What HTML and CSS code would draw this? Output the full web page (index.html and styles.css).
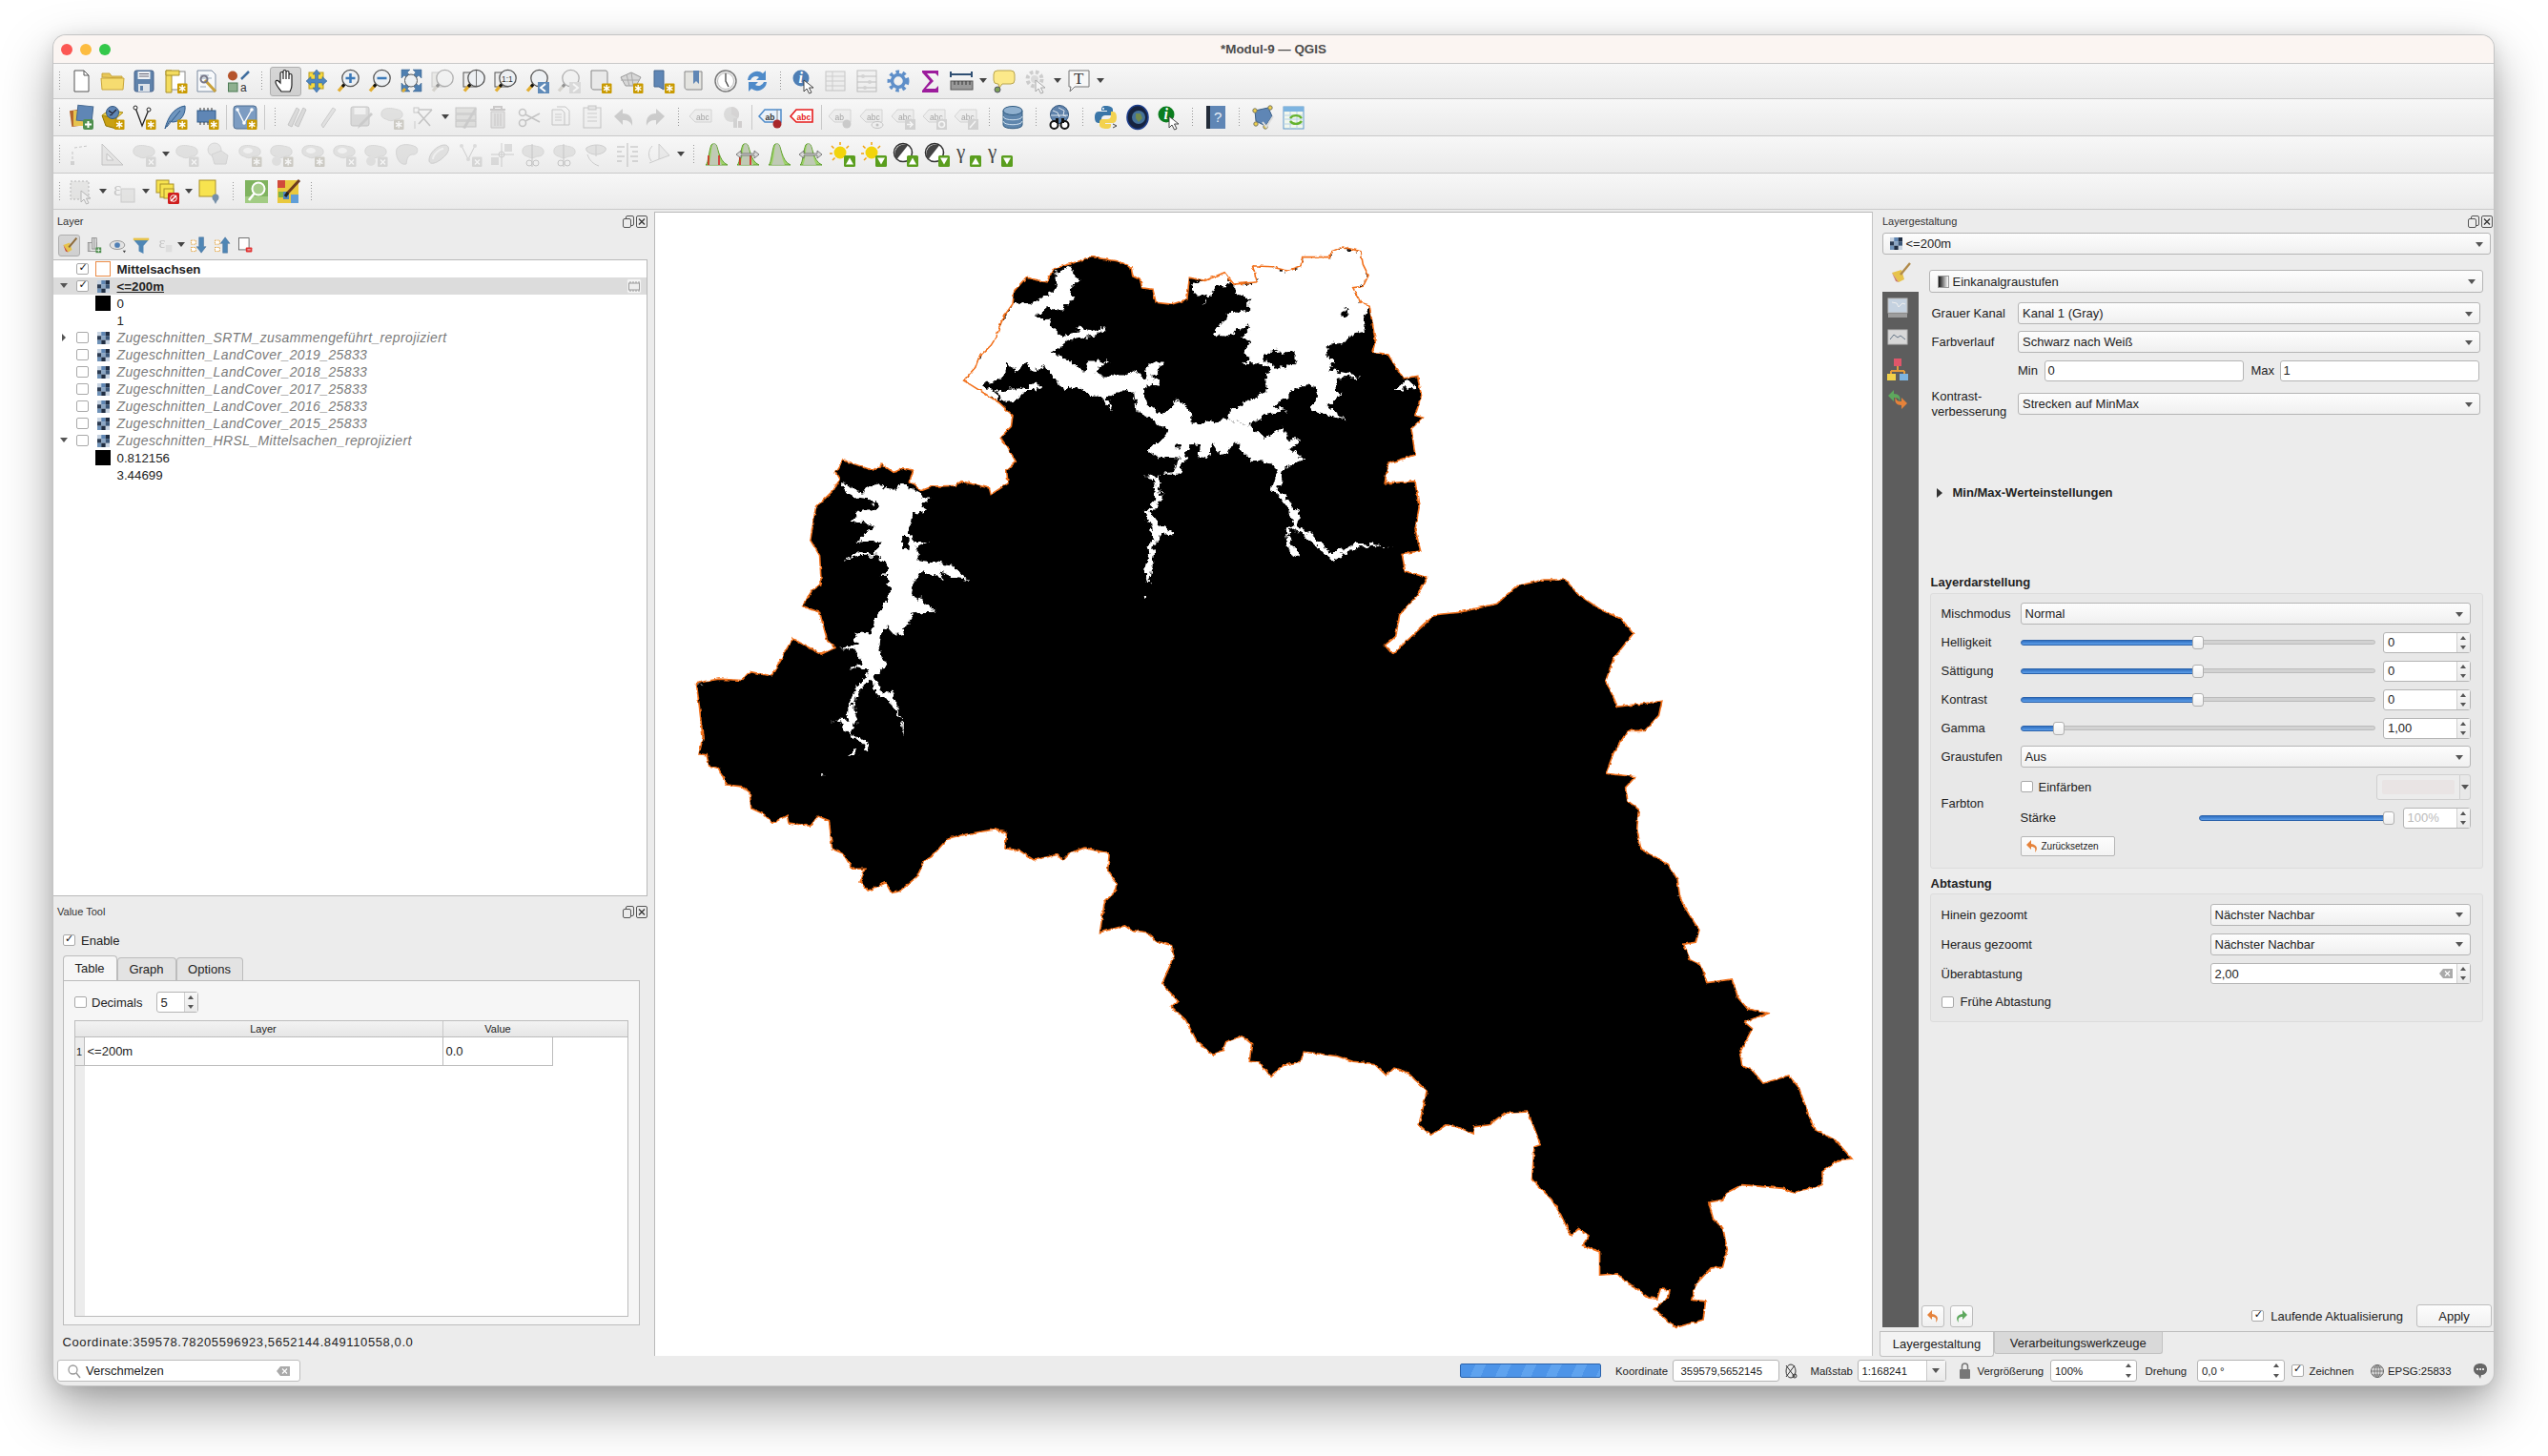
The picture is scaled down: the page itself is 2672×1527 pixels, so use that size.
FILE: index.html
```html
<!DOCTYPE html>
<html lang="de">
<head>
    <meta charset="UTF-8">
    <title>*Modul-9 — QGIS</title>
    <link rel="stylesheet" href="styles.css">
</head>
<body>

<!-- shared icon parts, every icon is drawn in px on a 26x26 box -->
<svg class="defs">
    <defs>
        <filter id="rough" color-interpolation-filters="sRGB"><feTurbulence type="fractalNoise" baseFrequency=".2" numOctaves="2" seed="3"/><feDisplacementMap in="SourceGraphic" scale="3.500" xChannelSelector="R" yChannelSelector="G"/></filter>
        <filter id="rougher" color-interpolation-filters="sRGB" x="-5%" y="-5%" width="110%" height="110%"><feTurbulence type="fractalNoise" baseFrequency=".13" numOctaves="3" seed="8"/><feDisplacementMap in="SourceGraphic" scale="9" xChannelSelector="R" yChannelSelector="G"/></filter>
        <g id="star"><rect x="15" y="15.500" width="10.500" height="10.500" rx="1" fill="#c99a00"/><path d="M20.200 17v7.500M17 18.800l6.400 3.900M23.400 18.800l-6.400 3.900" stroke="#fff" stroke-width="1.400"/></g>
        <g id="badge"><rect x="15" y="15.500" width="10.500" height="10.500" rx="1" fill="#b5b5b0"/><path d="M18 18.500l5 5M23 18.500l-5 5" stroke="#fff" stroke-width="1.400"/></g>
        <g id="lens"><path d="M9 16.500L3 23.500" stroke="#e2ae32" stroke-width="3.400"/><path d="M10 15.500l-3 3.500" stroke="#111" stroke-width="3"/><circle cx="15.500" cy="10" r="8.700" fill="#edf0f3" stroke="#555" stroke-width="1.300"/></g>
        <g id="blob"><path d="M2 8c1-5 9-5 13-4s8 1 9 5c1 5-4 6-6 6s-5 3-9 1-8-2-7-8z" fill="#c9c9c3" stroke="#b0b0aa"/></g>
        <g id="gup"><rect x="15" y="14" width="12" height="12" rx="1.500" fill="#5a9e1e"/><path d="M21 16.500l4 7h-8z" fill="#fff"/></g>
        <g id="gdown"><rect x="15" y="14" width="12" height="12" rx="1.500" fill="#5a9e1e"/><path d="M21 23.500l4-7h-8z" fill="#fff"/></g>
        <g id="sun"><circle cx="11" cy="11" r="6.500" fill="#f2d40c"/><path d="M11 0v3M2 4l2.500 2.500M20 4l-2.500 2.500M0 12h3M3 19l2.500-2.500" stroke="#f2a30c" stroke-width="1.500"/></g>
        <g id="cont"><circle cx="11" cy="11" r="9.500" fill="#fff" stroke="#333" stroke-width="1.600"/><path d="M16 3.500A9.500 9.500 0 0 0 4.500 18z" fill="#444"/></g>
        <g id="hist"><path d="M2 24C5 24 6 2 9 2h3c3 0 3 18 13 22z" fill="#9fd36a" stroke="#5f9e2e"/><path d="M5 24c3-3 3-22 5-22h2c2 0 3 14 7 22z" fill="#c8c8c8" opacity=".8"/></g>
        <g id="tag"><path d="M1 12l6-7h17v13H7z" fill="#e8e8e0" stroke="#aaa"/></g>
        <g id="cursor"><path d="M13 12v12l3-3 2.500 5 2.500-1-2.500-5H23z" fill="#fff" stroke="#333" stroke-width=".9"/></g>
        <g id="raster"><rect width="13" height="13" fill="#c7d3e1"/><rect x="4.300" width="4.300" height="4.300" fill="#5f86b3"/><rect x="8.700" width="4.300" height="4.300" fill="#1f2d42"/><rect y="4.300" width="4.300" height="4.300" fill="#2b3b52"/><rect x="4.300" y="4.300" width="4.300" height="4.300" fill="#8ba6c4"/><rect x="8.700" y="4.300" width="4.300" height="4.300" fill="#3c5778"/><rect y="8.700" width="4.300" height="4.300" fill="#6f92b8"/><rect x="4.300" y="8.700" width="4.300" height="4.300" fill="#1f2d42"/></g>
        <g id="float"><rect x="3.500" y=".500" width="8" height="10" rx="1.500" fill="none" stroke="#555"/><rect x=".500" y="3.500" width="8" height="9" rx="1.500" fill="#ececec" stroke="#555"/></g>
        <g id="close"><rect x=".500" y=".500" width="11" height="12" rx="1.500" fill="none" stroke="#555"/><path d="M3 3.500l6 6M9 3.500l-6 6" stroke="#333" stroke-width="1.300"/></g>

        <polyline id="north" vector-effect="non-scaling-stroke" points="60,1082 90,1072 120,1075 130,1055 158,1065 185,980 222,1015 240,1000 230,985 220,920 198,905 210,870 222,855 220,790 208,755 215,680 238,640 245,615 240,600 250,572 288,595 300,582 315,600 328,590 340,595 336,620 350,642 365,632 395,630 402,620 438,636 440,650 462,625 460,595 472,575 462,545 452,520 466,495 468,470 450,440 405,390 420,360 425,335 440,310 447,290 452,262 458,240 468,215 470,185 485,155 512,165 520,135 545,122 570,108 605,118 620,130 622,152 632,160 634,178 648,182 652,212 672,216 692,205 695,155 715,162 740,143 752,170 782,165 776,128 800,130 822,140 838,130 840,108 875,108 878,95 892,85 915,95 918,125 925,150 918,175 905,178 915,212 926,218 934,300 930,325 950,330 958,352 970,385 988,380 993,425 985,470 995,475 980,500 985,560 950,580 946,625 985,620 990,680 985,730 992,780 968,785 972,825 1000,840 988,880 965,925 960,975 946,995 956,1015 1010,925 1040,920 1090,900 1115,860 1150,845 1178,845 1195,880 1225,915 1250,935 1265,968 1240,1025 1230,1075 1245,1135 1270,1130 1302,1122 1298,1155 1280,1190 1258,1190 1240,1240 1230,1288 1268,1295 1255,1320 1258,1350 1272,1370 1270,1415 1275,1460 1310,1495 1322,1530 1325,1568"/>
        <polyline id="south" vector-effect="non-scaling-stroke" points="1325,523 1330,545 1350,600 1345,628 1330,632 1338,668 1352,680 1360,720 1392,712 1400,755 1412,780 1438,790 1408,810 1418,825 1402,880 1405,910 1418,920 1432,950 1465,932 1478,960 1490,1020 1498,1055 1525,1080 1546,1122 1530,1125 1508,1152 1508,1182 1470,1200 1458,1190 1405,1182 1385,1200 1380,1216 1362,1222 1368,1260 1380,1280 1386,1330 1380,1370 1365,1372 1345,1410 1340,1445 1358,1448 1355,1490 1320,1508 1308,1490 1292,1465 1310,1440 1312,1422 1300,1420 1296,1442 1285,1440 1270,1420 1250,1395 1245,1385 1222,1388 1222,1335 1200,1320 1208,1298 1195,1282 1185,1298 1172,1250 1160,1215 1135,1170 1138,1095 1146,1090 1130,1015 1100,1018 1080,1045 1060,1050 1060,1065 1040,1050 1025,1045 1005,1068 990,1045 1000,968 975,925 958,915 948,932 932,905 905,900 885,888 842,878 838,900 815,910 800,935 785,902 772,900 775,860 763,842 742,855 738,875 725,885 705,855 690,805 672,775 680,762 660,722 675,660 672,635 652,625 640,605 620,600 612,590 580,605 586,535 598,515 602,495 590,465 592,425 560,412 540,425 532,440 525,428 495,440 478,420 458,413 460,378 445,370 418,378 385,390 365,430 355,440 345,478 322,512 312,515 305,492 282,510 272,490 278,460 262,460 250,425 236,415 232,350 218,340 208,362 180,355 178,338 160,355 148,335 132,322 130,285 120,272 100,268 90,230 78,225 75,200 65,198 70,160 62,40 60,37"/>
    </defs>
</svg>

<div class="win">

    <div class="titlebar">
        <span class="light red"></span><span class="light amber"></span><span class="light green"></span>
        <span class="wintitle">*Modul-9 — QGIS</span>
    </div>

    <!-- Row 1: project, navigation, attributes -->
    <div class="tb">
        <i class="g lead"></i>
        <svg class="i"><path d="M6 2h10l5 5v17H6z" fill="#fff" stroke="#555"/><path d="M16 2v5h5" fill="none" stroke="#555"/></svg>
        <svg class="i"><path d="M2 9V5h8l2 3h11v2z" fill="#e8c85a" stroke="#c9a63a"/><path d="M2 22L1 10h24l-1 12z" fill="#f6dc70" stroke="#c9a63a"/></svg>
        <svg class="i"><rect x="3" y="2" width="20" height="22" rx="2" fill="#5f82ab" stroke="#44618a"/><rect x="6.500" y="3" width="13" height="8" fill="#eef1f5"/><path d="M8 5.500h10M8 8h10" stroke="#667"/><rect x="7" y="16" width="12" height="8" fill="#dde3ea"/><rect x="9" y="18" width="3" height="5" fill="#5f82ab"/></svg>
        <svg class="i"><rect x="8" y="3" width="15" height="19" fill="#fff" stroke="#888"/><path d="M3 2h6v23H3z" fill="#f3dc5f" stroke="#a8902a"/><path d="M3 2h14v5H3z" fill="#f3dc5f" stroke="#a8902a"/><use href="#star"/></svg>
        <svg class="i"><path d="M3 2h15l4 4v18H3z" fill="#f7f9fb" stroke="#7a8aa0"/><path d="M6 7h9M6 10h12M6 19h6" stroke="#9ab"/><path d="M11 12l11 12" stroke="#c9a23a" stroke-width="3"/><circle cx="10" cy="11" r="3.500" fill="none" stroke="#778" stroke-width="2"/></svg>
        <svg class="i"><circle cx="7" cy="7.500" r="5" fill="#b5532b"/><path d="M16 11l8-8" stroke="#3f6d9e" stroke-width="2.500"/><rect x="2.500" y="15" width="9.500" height="9" fill="#8fb08f" stroke="#4d7a55"/><text x="15" y="24" class="it">a</text></svg>
        <i class="g"></i>
        <span class="btn-on"><svg class="i"><path d="M9 24c-2-3-6-7-6-10 0-2 2-2 3-1l2 2V5c0-2 3-2 3 0v6V3c0-2 3-2 3 0v8V4c0-2 3-2 3 0v7V7c0-2 3-2 3 0v10c0 4-1 5-2 7z" fill="#fff" stroke="#222" stroke-width="1.200"/></svg></span>
        <svg class="i"><rect x="5" y="4" width="15" height="17" fill="#f7d93c" stroke="#b79a1f"/><path d="M13 1l4 5h-2.500v5H19V8.500l5 4.500-5 4.500V15h-4.500v5H17l-4 5-4-5h2.500v-5H7v2.500L2 13l5-4.500V11h4.500V6H9z" fill="#4f86bf" stroke="#2d5d92" stroke-width=".5"/></svg>
        <svg class="i"><use href="#lens"/><path d="M15.500 5v10M10.500 10h10" stroke="#3b79b8" stroke-width="2.600"/></svg>
        <svg class="i"><use href="#lens"/><path d="M10.500 10h10" stroke="#3b79b8" stroke-width="2.600"/></svg>
        <svg class="i"><path d="M3 1h9L9 4l3 3-3 3-3-3-3 3zM24 1v9l-3-3-3 3-3-3 3-3-3-3zM24 24h-9l3-3-3-3 3-3 3 3 3-3zM3 24v-9l3 3 3-3 3 3-3 3 3 3z" fill="#4f7fb0" stroke="#335e8b" stroke-width=".5"/><path d="M7 21l-3 3" stroke="#e2ae32" stroke-width="3"/><circle cx="13" cy="12.500" r="6.500" fill="#edf0f3" stroke="#555"/></svg>
        <svg class="i off"><rect x="2" y="4" width="14" height="15" fill="#e6dfa8" stroke="#998"/><use href="#lens"/></svg>
        <svg class="i"><rect x="2" y="4" width="14" height="15" fill="#eee" stroke="#555"/><use href="#lens"/><path d="M15.500 2v16" stroke="#777"/></svg>
        <svg class="i"><rect x="2" y="4" width="14" height="15" fill="#eee" stroke="#555"/><use href="#lens"/><text x="9" y="14" class="it tiny">1:1</text></svg>
        <svg class="i"><use href="#lens"/><rect x="14" y="14" width="12" height="12" fill="#5f8ab8"/><path d="M22 16l-5 4 5 4" fill="none" stroke="#fff" stroke-width="2"/></svg>
        <svg class="i off"><use href="#lens"/><rect x="14" y="14" width="12" height="12" fill="#bbb"/><path d="M18 16l5 4-5 4" fill="none" stroke="#fff" stroke-width="2"/></svg>
        <svg class="i"><path d="M4 2h15c2 0 2 2 2 3v17H7c-2 0-3-1-3-3z" fill="#e9e9e9" stroke="#888"/><use href="#star"/></svg>
        <svg class="i"><path d="M2 9L13 4l10 5-5 9H7z" fill="#d7d7d7" stroke="#999"/><path d="M8 6l3 12M13 4l2 14M2 12h20" stroke="#aaa"/><use href="#star"/></svg>
        <svg class="i"><path d="M4 2h10v20l-5-3-5 0z" fill="#5f86b5" stroke="#44678f"/><use href="#star"/></svg>
        <svg class="i"><path d="M3 3h18v19H6c-2 0-3-1-3-3z" fill="#e4e4e0" stroke="#888"/><path d="M12 2h6v14l-3-3-3 3z" fill="#5f86b5"/></svg>
        <svg class="i"><circle cx="13" cy="13" r="11" fill="#efefef" stroke="#777" stroke-width="1.400"/><circle cx="13" cy="13" r="8.500" fill="#fff" stroke="#bbb"/><path d="M13 5v8l3 6" fill="none" stroke="#444" stroke-width="1.300"/></svg>
        <svg class="i"><path d="M3 12a10 10 0 0 1 16-7l3-3v10h-10l3-3a6 6 0 0 0-9 3z" fill="#4f8bc9"/><path d="M23 14a10 10 0 0 1-16 7l-3 3V14h10l-3 3a6 6 0 0 0 9-3z" fill="#4f8bc9"/></svg>
        <i class="g"></i>
        <svg class="i"><circle cx="10" cy="10" r="8.500" fill="#4f7fb5"/><text x="7.500" y="15" class="it ii">i</text><use href="#cursor"/></svg>
        <svg class="i off"><rect x="3" y="3" width="20" height="20" fill="#e8e8e8" stroke="#888"/><path d="M3 8h20M3 13h20M3 18h20M10 3v20" stroke="#999"/></svg>
        <svg class="i off"><rect x="3" y="2" width="20" height="22" fill="#eee" stroke="#777"/><path d="M3 8h20M3 14h20M3 20h20" stroke="#777"/><circle cx="9" cy="8" r="2" fill="#aaa"/><circle cx="16" cy="14" r="2" fill="#aaa"/><circle cx="11" cy="20" r="2" fill="#aaa"/></svg>
        <svg class="i"><circle cx="13" cy="13" r="9.500" fill="none" stroke="#5f8fc9" stroke-width="4" stroke-dasharray="3.500 3.500"/><circle cx="13" cy="13" r="6.500" fill="none" stroke="#5f8fc9" stroke-width="3.500"/></svg>
        <svg class="i"><path d="M5 2h17v6l-3-3H10l7 8-8 8h10l3-3v7H5v-2l8-10-8-9z" fill="#9c1c9c"/></svg>
        <svg class="i"><path d="M2 6h22M2 3v6M24 3v6" stroke="#2f4f73" stroke-width="2"/><rect x="2" y="13" width="23" height="9" fill="#999" stroke="#555"/><path d="M6 13v4M10 13v4M14 13v4M18 13v4M22 13v4" stroke="#333"/></svg>
        <i class="arrow"></i>
        <svg class="i"><path d="M6 2h14a4 4 0 0 1 4 4v6a4 4 0 0 1-4 4h-9l-3 4-1-4H6a4 4 0 0 1-4-4V6a4 4 0 0 1 4-4z" fill="#fce98a" stroke="#b8a44d"/><circle cx="6" cy="22" r="3" fill="#7b9e57" stroke="#556"/></svg>
        <svg class="i off"><circle cx="12" cy="11" r="7.500" fill="none" stroke="#999" stroke-width="4" stroke-dasharray="3.500 2.500"/><circle cx="12" cy="11" r="4" fill="#bbb"/><use href="#cursor"/></svg>
        <i class="arrow"></i>
        <svg class="i"><path d="M3 2h21v17H9l-5 5 1-5H3z" fill="#f8f8f8" stroke="#777"/><text x="8" y="16" class="it serif">T</text></svg>
        <i class="arrow"></i>
    </div>

    <!-- Row 2: layers, digitizing, labels, plugins -->
    <div class="tb tall">
        <i class="g lead"></i>
        <svg class="i"><rect x="2" y="5" width="15" height="17" fill="#b5662c" transform="rotate(-8 10 13)"/><rect x="5" y="6" width="14" height="16" fill="#e6c34e"/><rect x="9" y="1" width="16" height="16" fill="#5f86b5" stroke="#44678f" transform="rotate(6 17 9)"/><rect x="15" y="15" width="11" height="11" rx="2" fill="#4f8f4f"/><path d="M20.500 17v7M17 20.500h7" stroke="#fff" stroke-width="2"/></svg>
        <svg class="i"><path d="M2 11l4 11 11 3V14z" fill="#c9a012" stroke="#8d7200"/><path d="M2 11l8-6 14 3-7 6z" fill="#f0d14a" stroke="#a88b16"/><circle cx="13" cy="8" r="6.500" fill="#5f86b5" stroke="#33577f"/><path d="M9 6l4 3 4-4M10 11l3-1" stroke="#223" stroke-width="1.300" fill="none"/><use href="#star"/></svg>
        <svg class="i"><path d="M4 3l7 19 7-17" fill="none" stroke="#222" stroke-width="1.300"/><circle cx="4" cy="3" r="2" fill="#fff" stroke="#222"/><circle cx="18" cy="5" r="2" fill="#fff" stroke="#222"/><use href="#star"/></svg>
        <svg class="i"><path d="M2 25C5 13 11 3 23 1c1 8-4 17-13 17l-3-1z" fill="#6f96bf" stroke="#2e5a8a"/><path d="M4 23L18 6" stroke="#2e5a8a"/><use href="#star"/></svg>
        <svg class="i"><rect x="3" y="6" width="19" height="12" fill="#5f86b5" stroke="#2f5a8a"/><path d="M6 3v3M10 3v3M14 3v3M18 3v3M6 18v3M10 18v3M14 18v3" stroke="#333"/><use href="#star"/></svg>
        <i class="sep"></i>
        <span class="btn-soft"><svg class="i"><rect x="1" y="1" width="24" height="24" rx="3" fill="#7c9cc2" stroke="#4d6c90"/><path d="M5 5l7 14 8-14" fill="none" stroke="#fff" stroke-width="1.400"/><circle cx="5" cy="5" r="1.800" fill="#fff"/><circle cx="20" cy="5" r="1.800" fill="#fff"/><circle cx="12" cy="19" r="1.800" fill="#fff"/><use href="#star"/></svg></span>
        <i class="sep"></i>
        <i class="g nar"></i>
        <svg class="i off"><path d="M7 23L3 21 12 3l3 2zM14 23l-4-2 9-18 3 2z" fill="#bbb" stroke="#888"/></svg>
        <svg class="i off"><path d="M7 24l-2-3L17 3l3 2z" fill="#ccc" stroke="#999"/></svg>
        <svg class="i off"><rect x="3" y="2" width="19" height="20" rx="2" fill="#bbb" stroke="#888"/><rect x="6.500" y="3" width="12" height="7" fill="#eee"/><path d="M10 25l2-5L24 8l2 2-12 12z" fill="#999"/></svg>
        <svg class="i off"><use href="#blob"/><use href="#star"/></svg>
        <svg class="i off"><rect x="3" y="3" width="5" height="5" fill="none" stroke="#888"/><path d="M7 7l13 15M22 5L8 20M8 5h14" stroke="#888" stroke-width="1.600"/><path d="M4 25v-8" stroke="#999"/></svg>
        <i class="arrow"></i>
        <svg class="i off"><rect x="2" y="3" width="21" height="6" fill="#c9c8a8" stroke="#888"/><rect x="2" y="10" width="21" height="6" fill="#c9c8a8" stroke="#888"/><rect x="2" y="17" width="21" height="6" fill="#c9c8a8" stroke="#888"/><path d="M9 24L22 3l2 1L12 25z" fill="#999"/></svg>
        <svg class="i off"><path d="M5 5h16M9 5V2h8v3" fill="none" stroke="#a88" stroke-width="2"/><path d="M6 7h14v17H6z" fill="#d7c8c8" stroke="#a88"/><path d="M10 9v13M13 9v13M16 9v13" stroke="#a88"/></svg>
        <svg class="i off"><circle cx="6" cy="8" r="3.500" fill="none" stroke="#888" stroke-width="1.600"/><circle cx="6" cy="19" r="3.500" fill="none" stroke="#888" stroke-width="1.600"/><path d="M9 10l15 8M9 17l15-8" stroke="#888" stroke-width="1.600"/></svg>
        <svg class="i off"><path d="M4 5h10l3 3v13H4z" fill="#eee" stroke="#888"/><path d="M9 2h9l4 4v15H17" fill="none" stroke="#888"/><path d="M7 10h7M7 13h7M7 16h7" stroke="#999"/></svg>
        <svg class="i off"><rect x="4" y="3" width="18" height="21" fill="#eee" stroke="#888"/><rect x="9" y="1" width="8" height="4" fill="#ccc" stroke="#888"/><path d="M8 9h10M8 13h10M8 17h10" stroke="#999"/></svg>
        <svg class="i off"><path d="M12 4v5c7 0 11 4 10 13-2-5-5-6-10-6v5L3 12z" fill="#999"/></svg>
        <svg class="i off"><path d="M14 4v5C7 9 3 13 4 22c2-5 5-6 10-6v5l9-9z" fill="#999"/></svg>
        <i class="g nar"></i>
        <svg class="i off"><use href="#tag"/><text x="8" y="15.500" class="it tiny">abc</text></svg>
        <svg class="i off"><circle cx="12" cy="10" r="8" fill="#bdbdb0"/><path d="M12 10V2a8 8 0 0 1 7 12z" fill="#c9a3a3"/><rect x="14" y="14" width="4" height="10" fill="#aaa"/><rect x="19" y="17" width="4" height="7" fill="#c99"/></svg>
        <i class="sep"></i>
        <svg class="i"><path d="M1 12l6-7h17v13H7z" fill="#eaf2fb" stroke="#4f8bc9" stroke-width="1.500"/><text x="7.500" y="15.500" class="it tiny bold">ab</text><path d="M20 5v12" stroke="#888"/><circle cx="20" cy="20" r="4.500" fill="#a8262a"/></svg>
        <svg class="i"><path d="M1 12l6-7h17v13H7z" fill="#fff" stroke="#e61c1c" stroke-width="1.600"/><text x="7.500" y="15.500" class="it tiny bold red-t">abc</text></svg>
        <i class="sep"></i>
        <svg class="i off"><use href="#tag"/><text x="7.500" y="15.500" class="it tiny">ab</text><circle cx="20" cy="20" r="4.500" fill="#999"/></svg>
        <svg class="i off"><use href="#tag"/><text x="8" y="15.500" class="it tiny">abc</text><ellipse cx="19" cy="21" rx="6" ry="3.500" fill="#eee" stroke="#888"/><circle cx="19" cy="21" r="1.500" fill="#888"/></svg>
        <svg class="i off"><use href="#tag"/><text x="8" y="15.500" class="it tiny">abc</text><rect x="15" y="15" width="11" height="11" fill="#aaa"/><path d="M17 20.500h6m-3-3l3 3-3 3" fill="none" stroke="#fff" stroke-width="1.500"/></svg>
        <svg class="i off"><use href="#tag"/><text x="8" y="15.500" class="it tiny">abc</text><rect x="15" y="15" width="11" height="11" fill="#aaa"/><circle cx="20.500" cy="20.500" r="3" fill="none" stroke="#fff" stroke-width="1.500"/></svg>
        <svg class="i off"><use href="#tag"/><text x="8" y="15.500" class="it tiny">abc</text><rect x="15" y="15" width="11" height="11" fill="#aaa"/><path d="M17 24l6-7" stroke="#fff" stroke-width="1.500"/></svg>
        <i class="g"></i>
        <svg class="i"><path d="M3 6v15c0 5 20 5 20 0V6" fill="#5f86ad" stroke="#2f5a80"/><ellipse cx="13" cy="6" rx="10" ry="4.500" fill="#8fb0cf" stroke="#2f5a80"/><path d="M3 12c0 5 20 5 20 0M3 17c0 5 20 5 20 0" fill="none" stroke="#cfe0ee"/></svg>
        <i class="g"></i>
        <svg class="i"><circle cx="13" cy="10" r="9.500" fill="#5f82ab" stroke="#33577f"/><path d="M6 6l5 2 2 5M12 3l6 3-1 5 3 1M4 11h18" fill="none" stroke="#e0e8f0"/><circle cx="7.500" cy="21" r="4" fill="#fff" stroke="#111" stroke-width="2"/><circle cx="18.500" cy="21" r="4" fill="#fff" stroke="#111" stroke-width="2"/><path d="M9 14h3v5H9zM15 14h3v5h-3z" fill="#111"/></svg>
        <i class="g"></i>
        <svg class="i"><path d="M13 1c-5 0-5 2-5 5h6v1H5c-3 0-4 3-4 6s1 6 4 6h3v-4c0-3 2-4 4-4h5c2 0 3-1 3-3V5c0-3-4-4-7-4z" fill="#3a76a8"/><circle cx="10" cy="4" r="1" fill="#fff"/><path d="M13 25c5 0 5-2 5-5h-6v-1h8c3 0 4-3 4-6s-1-6-4-6h-2v4c0 3-2 4-4 4H9c-2 0-3 1-3 3v3c0 3 4 4 7 4z" fill="#f3d24f"/><path d="M20 20l4 2-4 2" fill="none" stroke="#444"/></svg>
        <svg class="i"><ellipse cx="13" cy="13" rx="11" ry="12.500" fill="#16233f" stroke="#1d3e8c" stroke-width="1.600"/><circle cx="14" cy="13" r="7" fill="#45729a"/><path d="M11 9l5 0 2 5-4 4-3-4z" fill="#718a4f"/></svg>
        <svg class="i"><circle cx="10" cy="10" r="8.500" fill="#0b7d1e"/><text x="7.500" y="15" class="it ii">i</text><use href="#cursor"/></svg>
        <i class="g"></i>
        <svg class="i"><rect x="3" y="1" width="20" height="24" fill="#5f86b5"/><rect x="3" y="1" width="4" height="24" fill="#222b38"/><text x="11" y="18" class="it qm">?</text></svg>
        <i class="g"></i>
        <svg class="i"><path d="M5 6l14-3 4 9-7 10-10-5z" fill="#5f86b5" stroke="#3b5f85"/><circle cx="5" cy="6" r="2.200" fill="#f0d14a" stroke="#776"/><circle cx="21" cy="3" r="2.200" fill="#f0d14a" stroke="#776"/><circle cx="6" cy="20" r="2.200" fill="#f0d14a" stroke="#776"/><circle cx="16" cy="23" r="2.200" fill="#f0d14a" stroke="#776"/><path d="M13 18l4 5 7-11" fill="none" stroke="#ddd" stroke-width="2"/></svg>
        <svg class="i"><rect x="2" y="2" width="21" height="23" fill="#f2f7ec" stroke="#5f98c9"/><rect x="2" y="2" width="21" height="5" fill="#7db4e0"/><path d="M2 11h21M2 15h21M2 20h21M9 7v18M16 7v18" stroke="#b7d2e6"/><path d="M9 14a7 6 0 0 1 12 0M21 17a7 6 0 0 1-12 0" fill="none" stroke="#66b32e" stroke-width="2.400"/></svg>
    </div>

    <!-- Row 3: advanced digitizing, raster -->
    <div class="tb tall off-row">
        <i class="g lead"></i>
        <svg class="i off"><path d="M6 6L20 4M4 10v10" stroke="#888" stroke-dasharray="3 2" fill="none"/><rect x="2" y="20" width="4" height="4" fill="#aaa"/></svg>
        <svg class="i off"><path d="M2 2v22h22z" fill="#d8d2c8" stroke="#888"/><path d="M7 12v7h7z" fill="#f4f4f4" stroke="#888"/></svg>
        <svg class="i off"><use href="#blob"/><use href="#badge"/></svg>
        <i class="arrow"></i>
        <svg class="i off"><use href="#blob"/><use href="#badge"/></svg>
        <svg class="i off"><circle cx="9" cy="8" r="7" fill="#d4d4d0" stroke="#aaa"/><path d="M6 13l10-4 7 5-2 9H9z" fill="#c9c9c3" stroke="#aaa"/></svg>
        <svg class="i off"><use href="#blob"/><ellipse cx="11" cy="9" rx="5" ry="3" fill="#eee"/><use href="#star"/></svg>
        <svg class="i off"><use href="#blob"/><circle cx="8" cy="20" r="5" fill="#c9c9c3"/><use href="#star"/></svg>
        <svg class="i off"><use href="#blob"/><ellipse cx="11" cy="9" rx="5" ry="3" fill="#eee"/><use href="#star"/></svg>
        <svg class="i off"><use href="#blob"/><ellipse cx="11" cy="9" rx="5" ry="3" fill="#eee"/><use href="#badge"/></svg>
        <svg class="i off"><use href="#blob"/><circle cx="8" cy="20" r="5" fill="#c9c9c3"/><use href="#badge"/></svg>
        <svg class="i off"><path d="M2 7c4-6 14-5 20-2 3 2 2 8-2 8-4 0-7 1-8 10-7 2-12-8-10-16z" fill="#c9c9c3" stroke="#aaa"/></svg>
        <svg class="i off"><path d="M3 20C2 12 12 3 19 3c5 0 6 5 2 10-5 6-16 13-18 7z" fill="#c9c9c3" stroke="#999"/><path d="M7 18c0-5 7-11 11-11" fill="none" stroke="#eee" stroke-width="2"/></svg>
        <svg class="i off"><path d="M4 4l7 14 7-14" fill="none" stroke="#999"/><circle cx="4" cy="4" r="2" fill="#bbb"/><circle cx="18" cy="4" r="2" fill="#bbb"/><circle cx="11" cy="18" r="2" fill="#bbb"/><use href="#badge"/></svg>
        <svg class="i off"><path d="M13 1v25M2 13h24" stroke="#999"/><circle cx="13" cy="13" r="3" fill="none" stroke="#999"/><rect x="16" y="2" width="8" height="8" fill="#bbb"/><rect x="2" y="16" width="8" height="8" fill="#bbb"/></svg>
        <svg class="i off"><use href="#blob"/><path d="M12 2v24" stroke="#888"/><circle cx="9" cy="22" r="3" fill="none" stroke="#888"/><circle cx="16" cy="22" r="3" fill="none" stroke="#888"/></svg>
        <svg class="i off"><use href="#blob"/><path d="M12 2v24" stroke="#888"/><circle cx="9" cy="22" r="3" fill="none" stroke="#888"/><circle cx="16" cy="22" r="3" fill="none" stroke="#888"/></svg>
        <svg class="i off"><path d="M3 6c6-4 16-4 20 0 2 4-5 7-10 7S1 10 3 6z" fill="#c9c9c3" stroke="#999"/><path d="M13 3v12M4 13c2 6 6 10 12 12" fill="none" stroke="#999"/></svg>
        <svg class="i off"><path d="M2 5h8M2 10h5M2 15h8M2 20h5M16 5h8M18 10h6M16 15h8M18 20h6M13 1v25" stroke="#999" stroke-width="1.400"/></svg>
        <svg class="i off"><path d="M3 22L13 18V2L24 14 13 18" fill="#ddd" stroke="#999"/><path d="M6 4A12 12 0 0 0 5 20" fill="none" stroke="#999"/></svg>
        <i class="arrow"></i>
        <i class="g nar"></i>
        <svg class="i"><use href="#hist"/><path d="M5 14v10M16 14v10" stroke="#d81c1c" stroke-width="1.500"/></svg>
        <svg class="i"><use href="#hist"/><path d="M5 14v10M16 14v10" stroke="#d81c1c" stroke-width="1.500"/><path d="M1 13l5-4v3h14V9l5 4-5 4v-3H6v3z" fill="#d8d8d8" stroke="#555" stroke-width=".7"/></svg>
        <svg class="i"><use href="#hist"/></svg>
        <svg class="i"><use href="#hist"/><path d="M1 13l5-4v3h14V9l5 4-5 4v-3H6v3z" fill="#d8d8d8" stroke="#555" stroke-width=".7"/></svg>
        <svg class="i"><use href="#sun"/><use href="#gup"/></svg>
        <svg class="i"><use href="#sun"/><use href="#gdown"/></svg>
        <svg class="i"><use href="#cont"/><use href="#gup"/></svg>
        <svg class="i"><use href="#cont"/><use href="#gdown"/></svg>
        <svg class="i"><text x="1" y="17" class="it gamma">γ</text><use href="#gup"/></svg>
        <svg class="i"><text x="1" y="17" class="it gamma">γ</text><use href="#gdown"/></svg>
    </div>

    <!-- Row 4: selection -->
    <div class="tb last">
        <i class="g lead"></i>
        <svg class="i off"><rect x="2" y="2" width="19" height="19" fill="#d5d2c4" stroke="#666" stroke-dasharray="2 2"/><path d="M13 12v12l3-3 2.500 5 2.500-1-2.500-5H23z" fill="#eee" stroke="#666"/></svg>
        <i class="arrow"></i>
        <svg class="i off"><rect x="10" y="10" width="14" height="14" fill="#d5d2c4" stroke="#999"/><text x="2" y="17" class="it eps">ε</text></svg>
        <i class="arrow"></i>
        <svg class="i"><rect x="2" y="1" width="13" height="13" fill="#f7e34f" stroke="#a8902a"/><rect x="6" y="5" width="14" height="14" fill="#f7e34f" stroke="#a8902a"/><rect x="10" y="10" width="10" height="10" fill="#f7e34f" stroke="#a8902a"/><rect x="14" y="14" width="12" height="12" rx="1.500" fill="#cf1f1f"/><path d="M17 23l6-6" stroke="#fff" stroke-width="1.600"/><circle cx="20" cy="20" r="3.300" fill="none" stroke="#fff"/></svg>
        <i class="arrow"></i>
        <svg class="i"><rect x="2" y="1" width="17" height="17" fill="#f7e34f" stroke="#a8902a"/><circle cx="19" cy="19" r="3.500" fill="#768fa8"/><path d="M16 20l3 6 3-6z" fill="#768fa8"/></svg>
        <i class="g"></i>
        <svg class="i"><rect x="1" y="1" width="24" height="24" fill="#7fb35f"/><rect x="1" y="18" width="24" height="7" fill="#a2cc84"/><circle cx="15" cy="10" r="6.500" fill="#a5cc8a" stroke="#fff" stroke-width="2"/><path d="M10.500 15L5 22" stroke="#fff" stroke-width="2.600"/></svg>
        <svg class="i"><rect x="2" y="1" width="22" height="24" fill="#e9c93e"/><rect x="2" y="1" width="8" height="8" fill="#d14a3a"/><rect x="8" y="13" width="6" height="8" fill="#4f86bf"/><rect x="16" y="16" width="8" height="9" fill="#5f9ed8"/><rect x="3" y="13" width="5" height="6" fill="#7cb24a"/><path d="M25 1L12 15" stroke="#6b3b1f" stroke-width="3"/><path d="M13 14l-3 4" stroke="#222" stroke-width="3"/></svg>
        <i class="g"></i>
    </div>

    <div class="work">

        <!-- Left dock -->
        <div class="dock left">
            <div class="dock-title">
                <span>Layer</span>
                <span class="dock-btns"><svg class="d"><use href="#float"/></svg><svg class="d"><use href="#close"/></svg></span>
            </div>
            <div class="ptools">
                <span class="btn-on small"><svg class="p"><path d="M3 11l6 9 5-3-3-9z" fill="#e7c34a"/><path d="M3 11l6 9-3-1z" fill="#c9452a"/><path d="M10 14L20 2" stroke="#8d6a3a" stroke-width="2.400"/></svg></span>
                <svg class="p"><rect x="4" y="8" width="11" height="11" fill="#eee" stroke="#888"/><rect x="9" y="2" width="6" height="14" fill="#ddd" stroke="#888"/><path d="M12 2v14M6 8v11" stroke="#888"/><rect x="14" y="14" width="7" height="7" fill="#4f8f4f"/><path d="M17.500 15v5M15 17.500h5" stroke="#fff"/></svg>
                <svg class="p"><ellipse cx="11" cy="11" rx="9.500" ry="5.500" fill="#e3e3e3" stroke="#888"/><circle cx="11" cy="11" r="3.500" fill="#4f7fb5"/><path d="M18 18l2 3 2-3z" fill="#444"/></svg>
                <svg class="p"><path d="M1 4h20l-7 8v10l-6-3v-7z" fill="#4f86b5"/><rect x="1" y="2" width="20" height="3" fill="#e7c34a"/></svg>
                <svg class="p off"><text x="3" y="15" class="it eps">ε</text><rect x="12" y="11" width="8" height="9" fill="#ccc"/></svg>
                <i class="arrow"></i>
                <svg class="p"><path d="M3 5h6v5H3zM3 14h6v5H3z" fill="#fff" stroke="#e09a2c" stroke-dasharray="2 1"/><path d="M13 1h6v12h3l-6 8-6-8h3z" fill="#4f86b5" stroke="#335e8b" stroke-width=".5"/></svg>
                <svg class="p"><path d="M3 5h6v5H3zM3 14h6v5H3z" fill="#fff" stroke="#e09a2c" stroke-dasharray="2 1"/><path d="M13 21h6V9h3l-6-8-6 8h3z" fill="#4f86b5" stroke="#335e8b" stroke-width=".5"/></svg>
                <svg class="p"><rect x="3" y="2" width="13" height="15" fill="#fff" stroke="#555"/><rect x="12" y="14" width="8" height="6" rx="1" fill="#e03535"/><path d="M14 17h4" stroke="#fff"/></svg>
            </div>
            <div class="tree">
                <div class="row"><span class="tw"></span><span class="cb on"></span><span class="swatch poly"></span><span class="name bold">Mittelsachsen</span></div>
                <div class="row cur"><span class="tw open"></span><span class="cb on"></span><svg class="ras"><use href="#raster"/></svg><span class="name bold ul">&lt;=200m</span>
                    <svg class="chip"><rect x=".500" y=".500" width="15" height="15" rx="2" fill="#f4f4f4" stroke="#ddd"/><rect x="2.500" y="5" width="11" height="7" fill="#eee" stroke="#999"/><path d="M4 3v2M7 3v2M10 3v2M13 3v2M4 12v2M7 12v2M10 12v2M13 12v2" stroke="#999"/></svg></div>
                <div class="row"><span class="tw"></span><span class="cb none"></span><span class="swatch black"></span><span class="name">0</span></div>
                <div class="row"><span class="tw"></span><span class="cb none"></span><span class="swatch none"></span><span class="name">1</span></div>
                <div class="row"><span class="tw shut"></span><span class="cb"></span><svg class="ras"><use href="#raster"/></svg><span class="name grey">Zugeschnitten_SRTM_zusammengeführt_reprojiziert</span></div>
                <div class="row"><span class="tw"></span><span class="cb"></span><svg class="ras"><use href="#raster"/></svg><span class="name grey">Zugeschnitten_LandCover_2019_25833</span></div>
                <div class="row"><span class="tw"></span><span class="cb"></span><svg class="ras"><use href="#raster"/></svg><span class="name grey">Zugeschnitten_LandCover_2018_25833</span></div>
                <div class="row"><span class="tw"></span><span class="cb"></span><svg class="ras"><use href="#raster"/></svg><span class="name grey">Zugeschnitten_LandCover_2017_25833</span></div>
                <div class="row"><span class="tw"></span><span class="cb"></span><svg class="ras"><use href="#raster"/></svg><span class="name grey">Zugeschnitten_LandCover_2016_25833</span></div>
                <div class="row"><span class="tw"></span><span class="cb"></span><svg class="ras"><use href="#raster"/></svg><span class="name grey">Zugeschnitten_LandCover_2015_25833</span></div>
                <div class="row"><span class="tw open"></span><span class="cb"></span><svg class="ras"><use href="#raster"/></svg><span class="name grey">Zugeschnitten_HRSL_Mittelsachen_reprojiziert</span></div>
                <div class="row"><span class="tw"></span><span class="cb none"></span><span class="swatch black"></span><span class="name">0.812156</span></div>
                <div class="row"><span class="tw"></span><span class="cb none"></span><span class="swatch none"></span><span class="name">3.44699</span></div>
            </div>

            <div class="split"></div>

            <div class="dock-title vt-title">
                <span>Value Tool</span>
                <span class="dock-btns"><svg class="d"><use href="#float"/></svg><svg class="d"><use href="#close"/></svg></span>
            </div>
            <div class="vt">
                <label class="enable"><span class="cb on"></span>Enable</label>
                <div class="tabs">
                    <span class="tab sel">Table</span>
                    <span class="tab t2">Graph</span>
                    <span class="tab t3">Options</span>
                </div>
                <div class="pane">
                    <div class="decimals">
                        <span class="cb"></span><span class="dec-l">Decimals</span>
                        <span class="spin dec"><span class="val">5</span><span class="updown"></span></span>
                    </div>
                    <div class="table">
                        <div class="thead"><span class="th gut"></span><span class="th c1">Layer</span><span class="th c2">Value</span></div>
                        <div class="trow"><span class="gut">1</span><span class="c1">&lt;=200m</span><span class="c2">0.0</span></div>
                    </div>
                </div>
                <div class="coord">Coordinate:359578.78205596923,5652144.849110558,0.0</div>
            </div>
        </div>

        <!-- Map canvas -->
        <div class="canvas">
            <svg class="map">
                <g filter="url(#rough)">
                    <g transform="translate(-7 -3) scale(.8163 .4591)">
                        <use href="#north" class="land"/>
                    </g>
                    <g transform="translate(-7 477) scale(.8163 .4591)">
                        <use href="#south" class="land"/>
                    </g>
                    <!-- hides the seam where the two halves of the outline meet -->
                    <g transform="translate(-7 -3) scale(.8163 .4591)">
                        <path class="seam" vector-effect="non-scaling-stroke" d="M70 1086L1320 1566"/>
                    </g>
                    <g filter="url(#rougher)">
                        <g transform="translate(-7 -3) scale(.8163 .4591)">
                            <!-- north west high ground and upper valley -->
                            <polygon class="wh" points="405,390 425,335 452,262 468,215 482,212 495,215 510,195 525,180 520,150 540,128 553,160 540,180 548,205 530,215 532,230 512,225 497,240 515,250 518,268 530,287 555,282 552,262 570,280 588,268 575,288 540,298 525,315 516,325 535,340 545,352 560,370 565,345 592,345 572,370 582,380 612,380 625,365 640,390 640,352 660,352 648,380 658,405 640,400 632,430 650,452 660,468 668,458 680,432 695,455 697,490 660,500 640,470 628,460 625,415 600,415 590,428 597,465 585,430 565,420 550,405 535,412 530,395 520,385 510,355 495,368 485,350 470,368 460,348 455,378 445,392 428,400 440,410 450,425 448,432 415,420"/>
                            <polygon class="wh" points="445,412 475,410 500,397 505,405 480,418 470,438 458,440 450,420"/>
                            <!-- north east high ground -->
                            <polygon class="wh" points="700,165 715,162 740,143 752,170 782,165 776,128 800,130 822,140 838,130 840,108 875,108 878,95 892,85 915,95 918,125 925,150 918,175 905,178 915,212 926,218 918,245 920,278 903,285 895,302 872,310 870,335 882,345 875,365 915,380 885,385 880,410 890,420 872,450 897,480 870,470 850,455 860,425 856,395 830,410 818,432 800,450 820,460 795,465 772,490 745,480 748,455 780,430 795,405 790,375 800,362 785,352 762,350 772,340 765,320 775,300 762,290 772,270 770,262 745,290 725,285 735,262 745,240 772,228 772,205 755,190 752,170 730,175 712,225 720,195 700,195"/>
                            <!-- lake at the junction and the two rivers south of it -->
                            <polygon class="wh" points="640,545 665,522 668,500 660,490 697,485 745,480 772,490 790,525 810,505 815,495 820,522 838,525 825,545 842,570 818,590 808,640 820,660 835,695 835,725 855,745 878,788 905,765 925,762 955,772 925,768 905,775 880,800 860,775 845,745 825,728 820,745 835,790 828,790 820,765 818,730 830,722 825,688 815,662 800,640 806,600 800,578 775,570 752,530 745,555 735,562 725,532 720,565 705,572 710,540 695,538 685,590 680,605 655,605 660,660 645,690 655,715 675,738 655,745 650,770 645,855 640,848 637,820 642,790 648,730 640,705 638,690 652,665 650,615 638,610 675,598 682,570 655,565"/>
                            <!-- west valley -->
                            <polygon class="wh" points="250,625 265,635 270,645 280,640 298,625 300,635 318,640 325,625 340,640 362,660 348,680 358,690 340,695 335,725 340,760 358,760 345,770 345,800 370,805 390,815 412,845 395,840 375,825 378,845 350,825 340,855 338,880 352,895 368,915 340,925 325,965 315,970 305,950 298,975 296,990 300,1025 305,1040 295,1055 290,1068 300,1100 315,1105 322,1150 328,1170 328,1205 325,1165 310,1125 292,1105 286,1075 270,1100 262,1130 268,1160 258,1195 282,1215 282,1240 270,1215 255,1195 248,1170 235,1165 255,1165 258,1125 265,1095 280,1068 282,1050 258,1048 275,1035 265,1005 246,1002 268,995 262,965 285,968 290,935 305,900 310,870 305,830 295,840 310,815 295,790 270,790 250,802 270,780 290,785 300,755 265,760 275,745 290,725 280,715 260,712 270,690 295,680 280,660 262,655 250,640"/>
                            <polygon class="wh" points="958,412 975,390 985,402 985,410 970,408"/>
                            <polygon class="wh" points="255,1248 262,1235 270,1245"/>
                            <polygon class="wh" points="220,1290 226,1290 224,1294"/>
                            <polygon class="wh" points="634,882 638,882 636,888"/>
                            <!-- black left standing on the white -->
                            <polygon class="bl" points="790,328 805,322 815,330 830,322 830,345 818,362 808,360 800,350 790,345"/>
                            <polygon class="bl" points="890,245 895,218 898,240"/>
                            <polygon class="bl" points="326,745 334,745 334,775 326,775"/>
                            <ellipse class="bl" cx="680" cy="542" rx="4" ry="4"/>
                        </g>
                    </g>
                    <g transform="translate(-7 -3) scale(.8163 .4591)">
                        <use href="#north" class="edge"/>
                    </g>
                    <g transform="translate(-7 477) scale(.8163 .4591)">
                        <use href="#south" class="edge"/>
                    </g>
                </g>
            </svg>
        </div>

        <!-- Right dock -->
        <div class="dock right">
            <div class="dock-title r-title">
                <span>Layergestaltung</span>
                <span class="dock-btns"><svg class="d"><use href="#float"/></svg><svg class="d"><use href="#close"/></svg></span>
            </div>
            <div class="combo layer-pick"><svg class="ras small"><use href="#raster"/></svg>&lt;=200m</div>

            <div class="style-body">
                <div class="side">
                    <div class="side-top"><svg class="s"><path d="M3 11l7 10 6-3-3-10z" fill="#e7c34a"/><path d="M3 11l7 10-3-1z" fill="#c97a6a"/><path d="M12 13L22 1" stroke="#b08a4a" stroke-width="2.400"/></svg></div>
                    <svg class="s"><rect x="2" y="2" width="20" height="15" fill="#c5d2e0" stroke="#bbb"/><path d="M6 6l5 1 2 4 4-4 3 1" fill="none" stroke="#eee"/><path d="M2 19h20M2 21h20" stroke="#ddd"/></svg>
                    <svg class="s"><rect x="2" y="3" width="20" height="15" fill="#d8d8d8" stroke="#bbb"/><path d="M4 13l4-5 4 3 3-2 5 4" fill="none" stroke="#678"/></svg>
                    <svg class="s"><rect x="8" y="1" width="8" height="8" fill="#e0566a"/><path d="M12 9v5M5 14h14M5 14v4M19 14v4" stroke="#e39b3a" stroke-width="2"/><rect x="1" y="17" width="9" height="7" fill="#f0d14a"/><rect x="14" y="17" width="9" height="7" fill="#7db4e0"/></svg>
                    <svg class="s"><path d="M8 2l-6 6 6 6v-4c4 0 6 1 6 5 2-6-1-9-6-9z" fill="#5da85d"/><path d="M16 22l6-6-6-6v4c-4 0-6-1-6-5-2 6 1 9 6 9z" fill="#e5823a"/></svg>
                </div>
                <div class="style-main">
                    <div class="combo wide"><span class="gradbox"></span>Einkanalgraustufen</div>

                    <div class="form">
                        <div class="frow"><span class="lbl">Grauer Kanal</span><span class="combo fill">Kanal 1 (Gray)</span></div>
                        <div class="frow"><span class="lbl">Farbverlauf</span><span class="combo fill">Schwarz nach Weiß</span></div>
                        <div class="frow"><span class="lbl"></span><span class="mm">Min</span><span class="input mm-i">0</span><span class="mm m2">Max</span><span class="input mm-i">1</span></div>
                        <div class="frow kontrast"><span class="lbl">Kontrast-<br>verbesserung</span><span class="combo fill">Strecken auf MinMax</span></div>
                    </div>

                    <div class="collapsed"><i class="tri"></i>Min/Max-Werteinstellungen</div>

                    <div class="gtitle render">Layerdarstellung</div>
                    <div class="group">
                        <div class="grow"><span class="glbl">Mischmodus</span><span class="combo fill">Normal</span></div>
                        <div class="grow"><span class="glbl">Helligkeit</span>
                            <div class="slider"><i class="sfill half"></i><b class="thumb"></b><i class="srest"></i></div>
                            <span class="spin"><span class="val">0</span><span class="updown"></span></span></div>
                        <div class="grow"><span class="glbl">Sättigung</span>
                            <div class="slider"><i class="sfill half"></i><b class="thumb"></b><i class="srest"></i></div>
                            <span class="spin"><span class="val">0</span><span class="updown"></span></span></div>
                        <div class="grow"><span class="glbl">Kontrast</span>
                            <div class="slider"><i class="sfill half"></i><b class="thumb"></b><i class="srest"></i></div>
                            <span class="spin"><span class="val">0</span><span class="updown"></span></span></div>
                        <div class="grow"><span class="glbl">Gamma</span>
                            <div class="slider"><i class="sfill gam"></i><b class="thumb"></b><i class="srest"></i></div>
                            <span class="spin"><span class="val">1,00</span><span class="updown"></span></span></div>
                        <div class="grow"><span class="glbl">Graustufen</span><span class="combo fill">Aus</span></div>
                        <div class="tint">
                            <span class="glbl tint-l">Farbton</span>
                            <div class="tint-r">
                                <div class="tint-top"><span class="cb"></span><span class="ein">Einfärben</span>
                                    <span class="colorbtn"><i></i></span><span class="colorarr"></span></div>
                                <div class="tint-mid"><span class="staerke">Stärke</span>
                                    <div class="slider st"><i class="sfill full"></i><b class="thumb"></b></div>
                                    <span class="spin st-s"><span class="val dim">100%</span><span class="updown"></span></span></div>
                                <span class="reset"><svg class="u"><path d="M6 1L1 6l5 5V8c4 0 5 2 4 6 3-3 3-8-4-9z" fill="#e5823a"/></svg>Zurücksetzen</span>
                            </div>
                        </div>
                    </div>

                    <div class="gtitle sample">Abtastung</div>
                    <div class="group g2">
                        <div class="srow"><span class="slbl">Hinein gezoomt</span><span class="combo fill">Nächster Nachbar</span></div>
                        <div class="srow"><span class="slbl">Heraus gezoomt</span><span class="combo fill">Nächster Nachbar</span></div>
                        <div class="srow"><span class="slbl">Überabtastung</span>
                            <span class="spin over"><span class="val">2,00</span>
                                <svg class="clr"><path d="M0 6l4-5h10v10H4z" fill="#aaa"/><path d="M6 3.500l5 5M11 3.500l-5 5" stroke="#fff" stroke-width="1.200"/></svg>
                                <span class="updown"></span></span></div>
                        <div class="early"><span class="cb"></span>Frühe Abtastung</div>
                    </div>

                    <div class="style-foot">
                        <span class="mini"><svg class="u"><path d="M6 1L1 6l5 5V8c4 0 5 2 4 6 3-3 3-8-4-9z" fill="#e5823a"/></svg></span>
                        <span class="mini"><svg class="u"><path d="M8 1l5 5-5 5V8C4 8 3 10 4 14 1 11 1 6 8 5z" fill="#5da85d"/></svg></span>
                        <span class="live"><span class="cb on"></span>Laufende Aktualisierung</span>
                        <span class="apply">Apply</span>
                    </div>
                </div>
            </div>

            <div class="rtabs">
                <span class="rtab sel">Layergestaltung</span>
                <span class="rtab">Verarbeitungswerkzeuge</span>
            </div>
        </div>
    </div>

    <!-- Status bar -->
    <div class="status">
        <div class="locator">
            <svg class="loc-i"><circle cx="6.500" cy="6.500" r="4.500" fill="none" stroke="#999" stroke-width="1.300"/><path d="M10 10l4 5" stroke="#999" stroke-width="1.500"/></svg>
            <span class="loc-t">Verschmelzen</span>
            <svg class="clr"><path d="M0 6l4-5h10v10H4z" fill="#aaa"/><path d="M6 3.500l5 5M11 3.500l-5 5" stroke="#fff" stroke-width="1.200"/></svg>
        </div>
        <div class="progress"></div>
        <span class="sl s-koord">Koordinate</span>
        <span class="input st-in w-koord">359579,5652145</span>
        <svg class="st-i"><path d="M4 2l9 12M13 2L4 14" stroke="#333"/><ellipse cx="9" cy="8" rx="5" ry="7" fill="none" stroke="#333"/><circle cx="13" cy="13" r="2" fill="none" stroke="#333"/></svg>
        <span class="sl s-mass">Maßstab</span>
        <span class="scale"><span class="scale-v">1:168241</span><span class="scale-a"></span></span>
        <svg class="lock"><rect x="1" y="7" width="11" height="10" rx="1" fill="#777"/><path d="M3.500 7V4a3 3 0 0 1 6 0v3" fill="none" stroke="#777" stroke-width="1.500"/></svg>
        <span class="sl s-verg">Vergrößerung</span>
        <span class="spin st-sp w-verg"><span class="val">100%</span><span class="updown"></span></span>
        <span class="sl s-dreh">Drehung</span>
        <span class="spin st-sp w-dreh"><span class="val">0,0 °</span><span class="updown"></span></span>
        <span class="cb on st-cb"></span>
        <span class="sl s-zeich">Zeichnen</span>
        <svg class="globe"><circle cx="7" cy="8" r="6.500" fill="#ddd" stroke="#666"/><path d="M.500 8h13M7 1.500v13M2 4h10M2 12h10" stroke="#666" stroke-width=".8"/><ellipse cx="7" cy="8" rx="3" ry="6.500" fill="none" stroke="#666" stroke-width=".8"/></svg>
        <span class="sl s-epsg">EPSG:25833</span>
        <svg class="bubble"><path d="M7 1c4 0 7 2 7 6s-3 6-6 6l-1 4-2-4c-2-.5-5-2-5-6s3-6 7-6z" fill="#666"/><circle cx="4" cy="7" r="1.100" fill="#fff"/><circle cx="7" cy="7" r="1.100" fill="#fff"/><circle cx="10" cy="7" r="1.100" fill="#fff"/></svg>
    </div>
</div>

</body>
</html>
```

FILE: styles.css
```css
* {
    box-sizing: border-box;
}

html, body {
    height: 100%;
}

body {
    margin: 0;
    padding: 37px 57px 74px 56px;
    background: #fff;
    font-family: "Liberation Sans", Arial, sans-serif;
    font-size: 13px;
    color: #222;
    overflow: hidden;
}

.defs {
    width: 0;
    height: 0;
    position: absolute;
}

.win {
    height: 1416px;
    display: flex;
    flex-direction: column;
    background: #ececec;
    border-radius: 13px;
    box-shadow: 0 0 0 1px #c4c4c4, 0 24px 55px rgba(0, 0, 0, 0.36), 0 4px 20px rgba(0, 0, 0, 0.12);
    overflow: hidden;
}

/* Title bar */

.titlebar {
    height: 30px;
    flex: none;
    display: flex;
    align-items: center;
    padding-left: 8px;
    gap: 8px;
    background: #fbf5f2;
    border-bottom: 1px solid #c9c9c9;
    position: relative;
}

.light {
    width: 12px;
    height: 12px;
    border-radius: 50%;
}

.red { background: #fc5753; }
.amber { background: #fdbc40; }
.green { background: #34c84a; }

.wintitle {
    position: absolute;
    left: 0;
    right: 0;
    text-align: center;
    font-size: 13.400px;
    font-weight: bold;
    color: #4c4c4c;
}

/* Toolbars */

.tb {
    height: 37px;
    flex: none;
    display: flex;
    align-items: center;
    background: linear-gradient(#f7f7f7, #ebebeb);
    border-bottom: 1px solid #c9c9c9;
}

.tb.tall {
    height: 39px;
}

.tb.last {
    height: 38px;
}

.i {
    width: 26px;
    height: 26px;
    margin: 0 3.500px;
    flex: none;
    overflow: visible;
}

.off {
    opacity: 0.42;
    filter: grayscale(0.9);
}

.it {
    font-family: "Liberation Sans", sans-serif;
    font-size: 12px;
    fill: #333;
}

.it.tiny { font-size: 8.500px; }
.it.bold { font-weight: bold; }
.it.red-t { fill: #e61c1c; }
.it.ii { font-family: "Liberation Serif", serif; font-size: 16px; font-style: italic; font-weight: bold; fill: #fff; }
.it.serif { font-family: "Liberation Serif", serif; font-size: 17px; }
.it.qm { font-size: 15px; fill: #e6eef6; }
.it.gamma { font-family: "Liberation Serif", serif; font-size: 21px; fill: #444; }
.it.eps { font-family: "Liberation Serif", serif; font-size: 20px; fill: #888; }

.g {
    width: 16px;
    height: 22px;
    flex: none;
    display: block;
    background: radial-gradient(circle, #999 0.8px, transparent 1px) center top / 3px 3px repeat-y;
}

.g.lead {
    width: 12.500px;
}

.g.nar {
    width: 15px;
}

.arrow {
    width: 12px;
    height: 6px;
    flex: none;
    display: block;
    position: relative;
}

.arrow::after {
    content: "";
    position: absolute;
    left: 2px;
    top: 0;
    border: 4px solid transparent;
    border-top: 5px solid #444;
    border-bottom: 0;
}

.sep {
    width: 7px;
    height: 26px;
    flex: none;
    display: block;
    background: linear-gradient(#c9c9c9, #c9c9c9) center / 1px 100% no-repeat;
}

.btn-on {
    width: 33px;
    height: 31px;
    flex: none;
    display: flex;
    align-items: center;
    background: linear-gradient(#d6d6d6, #cfcfcf);
    border: 1px solid #aeaeae;
    border-radius: 3px;
}

.btn-on .i {
    margin: 0 2.500px;
}

.btn-soft {
    display: flex;
}

/* Work area */

.work {
    flex: 1;
    min-height: 0;
    display: flex;
    padding-top: 2px;
}

.dock {
    display: flex;
    flex-direction: column;
    flex: none;
    background: #ececec;
}

.dock.left {
    width: 630px;
    margin-top: -2px;
}

.dock-title {
    height: 24px;
    flex: none;
    display: flex;
    align-items: center;
    justify-content: space-between;
    padding: 0 7px 0 4px;
    font-size: 11px;
    color: #333;
}

.dock-btns {
    display: flex;
    gap: 2px;
}

.d {
    width: 12px;
    height: 13px;
}

.ptools {
    height: 28px;
    flex: none;
    display: flex;
    align-items: center;
    gap: 3px;
    padding: 0 0 2px 5px;
}

.p {
    width: 22px;
    height: 22px;
    flex: none;
    overflow: visible;
    transform: scale(0.82);
}

.btn-on.small {
    width: 23px;
    height: 23px;
}

.ptools .arrow {
    width: 9px;
    margin-left: -3px;
}

/* Layer tree */

.tree {
    height: 668px;
    width: 623px;
    flex: none;
    background: #fff;
    border-top: 1px solid #b9b9b9;
    border-right: 1px solid #b9b9b9;
    border-bottom: 1px solid #b9b9b9;
}

.row {
    height: 18px;
    display: flex;
    align-items: center;
    color: #222;
}

.row.cur {
    background: #dcdcdc;
}

.tw {
    width: 24px;
    flex: none;
    position: relative;
    height: 18px;
}

.tw.open::after {
    content: "";
    position: absolute;
    left: 7px;
    top: 6px;
    border: 4px solid transparent;
    border-top: 5px solid #555;
    border-bottom: 0;
}

.tw.shut::after {
    content: "";
    position: absolute;
    left: 9px;
    top: 5px;
    border: 4px solid transparent;
    border-left: 4px solid #555;
    border-right: 0;
}

.cb {
    width: 13px;
    height: 12px;
    flex: none;
    display: inline-block;
    background: #fff;
    border: 1px solid #a9a9a9;
    border-radius: 2px;
    position: relative;
}

.cb.on::after {
    content: "✓";
    position: absolute;
    left: 1.500px;
    top: -3px;
    font-family: "DejaVu Sans", sans-serif;
    font-size: 11px;
    color: #111;
}

.cb.none {
    visibility: hidden;
}

.swatch {
    width: 16px;
    height: 16px;
    margin-left: 7px;
    flex: none;
}

.swatch.black { background: #000; }
.swatch.poly { background: #fff; border: 1px solid #ea8a45; }

.ras {
    width: 13px;
    height: 13px;
    margin: 0 1.500px 0 8.500px;
    flex: none;
}

.name {
    margin-left: 6.500px;
    font-size: 13.300px;
    white-space: nowrap;
}

.bold { font-weight: bold; }
.ul { text-decoration: underline; }

.grey {
    font-style: italic;
    font-size: 14px;
    letter-spacing: 0.38px;
    color: #7b7b7b;
}

.chip {
    width: 16px;
    height: 16px;
    margin-left: auto;
    margin-right: 5px;
}

/* Value tool */

.split {
    height: 6px;
    flex: none;
}

.vt-title {
    height: 20px;
}

.vt {
    flex: 1;
    padding: 0 15px 0 9.500px;
    display: flex;
    flex-direction: column;
}

.enable {
    display: flex;
    align-items: center;
    gap: 6.500px;
    height: 18px;
    margin-top: 11px;
}

.tabs {
    display: flex;
    margin-top: 7px;
    height: 26px;
    align-items: flex-end;
}

.tab {
    height: 24px;
    display: flex;
    align-items: center;
    justify-content: center;
    background: #e3e3e3;
    border: 1px solid #bcbcbc;
    border-bottom: 0;
    border-radius: 4px 4px 0 0;
    width: 62px;
}

.tab.sel {
    width: 57px;
    height: 26px;
    background: #f6f6f6;
}

.tab.t3 {
    width: 70px;
}

.pane {
    height: 362px;
    flex: none;
    background: #f6f6f6;
    border: 1px solid #bcbcbc;
    padding: 0 11px;
}

.decimals {
    display: flex;
    align-items: center;
    height: 41px;
    padding-top: 3px;
}

.dec-l {
    margin-left: 5.500px;
    width: 67.500px;
}

.spin {
    display: flex;
    align-items: center;
    height: 22px;
    background: #fff;
    border: 1px solid #b5b5b5;
    border-radius: 3px;
    flex: none;
}

.spin.dec {
    width: 44px;
}

.val {
    flex: 1;
    padding-left: 4px;
}

.dim {
    color: #bbb;
}

.updown {
    width: 14px;
    height: 100%;
    flex: none;
    border-left: 1px solid #d0d0d0;
    background: linear-gradient(#f7f7f7, #eaeaea);
    position: relative;
}

.updown::before, .updown::after {
    content: "";
    position: absolute;
    left: 3px;
    border: 3.500px solid transparent;
}

.updown::before {
    top: 3px;
    border-bottom: 4px solid #555;
    border-top: 0;
}

.updown::after {
    bottom: 3px;
    border-top: 4px solid #555;
    border-bottom: 0;
}

.table {
    height: 311px;
    background: linear-gradient(#ececec, #ececec) left / 10px 100% no-repeat, #fff;
    border: 1px solid #bcbcbc;
    font-size: 13px;
}

.thead {
    display: flex;
    height: 17px;
    background: linear-gradient(#f3f3f3, #e6e6e6);
    border-bottom: 1px solid #bcbcbc;
    font-size: 11px;
}

.th {
    display: flex;
    align-items: center;
    justify-content: center;
}

.gut {
    width: 10px;
    flex: none;
}

.c1 {
    width: 376px;
    flex: none;
}

.c2 {
    width: 115px;
    flex: none;
}

.thead .c1 {
    border-right: 1px solid #c9c9c9;
}

.trow {
    display: flex;
    height: 30px;
    align-items: center;
}

.trow .gut {
    height: 100%;
    background: #ececec;
    display: flex;
    align-items: center;
    justify-content: center;
    font-size: 11px;
    border-right: 1px solid #bcbcbc;
    border-bottom: 1px solid #bcbcbc;
}

.trow .c1, .trow .c2 {
    height: 100%;
    display: flex;
    align-items: center;
    padding-left: 3px;
    border-right: 1px solid #bcbcbc;
    border-bottom: 1px solid #bcbcbc;
}

.coord {
    margin-top: 8px;
    height: 18px;
    display: flex;
    align-items: center;
    white-space: nowrap;
    font-size: 13px;
    letter-spacing: 0.6px;
}

/* Map */

.canvas {
    width: 1278px;
    flex: none;
    background: #fff;
    border: 1px solid #b9b9b9;
    border-right: 1px solid #c4c4c4;
    border-bottom: 0;
}

.map {
    width: 100%;
    height: 100%;
    display: block;
}

.land {
    fill: #000;
    stroke: none;
}

.seam {
    fill: none;
    stroke: #000;
    stroke-width: 3px;
}

.edge {
    fill: none;
    stroke: #f2711c;
    stroke-width: 1.600px;
}

.wh { fill: #fff; }
.bl { fill: #000; }

/* Right dock */

.dock.right {
    flex: 1;
    margin-top: -2px;
    padding-left: 9.500px;
    padding-right: 3px;
}

.r-title {
    padding: 0 0 0 0.500px;
    margin-right: -1.500px;
}

.combo {
    display: flex;
    align-items: center;
    height: 23px;
    padding: 0 24px 0 4px;
    background: linear-gradient(#fdfdfd, #f0f0f0);
    border: 1px solid #b5b5b5;
    border-radius: 3px;
    position: relative;
    white-space: nowrap;
}

.combo::after {
    content: "";
    position: absolute;
    right: 7px;
    top: 50%;
    margin-top: -2px;
    border: 4px solid transparent;
    border-top: 5px solid #555;
    border-bottom: 0;
}

.layer-pick {
    flex: none;
    padding-left: 7px;
}

.ras.small {
    margin: 0 4px 0 0;
}

.style-body {
    display: flex;
    height: 1124px;
    flex: none;
    margin-top: 1px;
}

.side {
    width: 38px;
    flex: none;
    background: #5d5d5d;
    display: flex;
    flex-direction: column;
    align-items: flex-start;
    gap: 8px;
    padding-left: 0;
}

.side .s {
    margin-left: 4px;
}

.side-top {
    width: 38px;
    height: 38px;
    background: #ececec;
    display: flex;
    align-items: center;
    justify-content: center;
    margin-bottom: -3px;
}

.side-top .s {
    margin-left: 0;
}

.s {
    width: 24px;
    height: 24px;
    flex: none;
}

.style-main {
    flex: 1;
    padding: 15px 8px 0 11px;
    display: flex;
    flex-direction: column;
    position: relative;
}

.combo.wide {
    height: 24px;
    flex: none;
    padding-left: 8px;
}

.gradbox {
    width: 12px;
    height: 13px;
    margin-right: 4px;
    background: linear-gradient(90deg, #111, #fff);
    border: 1px solid #999;
}

.form {
    padding-left: 3px;
}

.frow {
    display: flex;
    align-items: center;
    height: 23px;
    margin-top: 7px;
}

.form .frow:first-child {
    margin-top: 10px;
}

.lbl {
    width: 90.500px;
    flex: none;
    line-height: 16px;
}

.combo.fill {
    flex: 1;
    min-width: 0;
}

.form .frow .combo.fill, .form .frow .mm-i:last-child {
    margin-right: 3.500px;
}

.mm {
    width: 27.500px;
    flex: none;
}

.mm.m2 {
    width: 37.500px;
    padding-left: 7.500px;
}

.input {
    display: flex;
    align-items: center;
    background: #fff;
    border: 1px solid #b5b5b5;
    border-radius: 3px;
    padding-left: 3px;
    white-space: nowrap;
}

.mm-i {
    width: 209.500px;
    height: 22px;
    flex: none;
}

.kontrast {
    margin-top: 12px;
}

.collapsed {
    display: flex;
    align-items: center;
    height: 16px;
    margin-top: 73.500px;
    padding-left: 8px;
    font-weight: bold;
}

.tri {
    width: 17px;
    height: 10px;
    position: relative;
}

.tri::after {
    content: "";
    position: absolute;
    left: 0;
    top: 0;
    border: 5px solid transparent;
    border-left: 6px solid #333;
    border-right: 0;
}

.gtitle {
    height: 16px;
    flex: none;
    padding-left: 2px;
    font-weight: bold;
    display: flex;
    align-items: center;
}

.gtitle.render {
    margin-top: 78px;
}

.gtitle.sample {
    margin-top: 8px;
}

.group {
    height: 289px;
    flex: none;
    margin: 3px 0 0 1px;
    padding: 10px 12px 0 11px;
    background: #e8e8e8;
    border: 1px solid #dcdcdc;
    border-radius: 3px;
}

.grow {
    display: flex;
    align-items: center;
    height: 22px;
    margin-bottom: 8px;
}

.glbl {
    width: 83px;
    flex: none;
}

.slider {
    width: 372.500px;
    height: 12px;
    flex: none;
    display: flex;
    align-items: center;
}

.sfill {
    height: 6px;
    flex: none;
    display: block;
    background: linear-gradient(#2f6fc0, #5fa0ea);
    border-radius: 3px 0 0 3px;
    border: 1px solid #2a62ab;
}

.sfill.half { width: 186px; }
.sfill.gam { width: 40px; }
.sfill.full { width: 199px; }

.thumb {
    width: 12px;
    height: 14px;
    flex: none;
    display: block;
    margin: 0 -6px;
    background: linear-gradient(#fff, #eee);
    border: 1px solid #b0b0b0;
    border-radius: 3px;
    position: relative;
    z-index: 1;
}

.srest {
    flex: 1;
    height: 5px;
    display: block;
    background: #d2d2d2;
    border: 1px solid #bbb;
    border-radius: 0 3px 3px 0;
}

.grow .spin {
    width: 91.500px;
    margin-left: 8px;
}

.tint {
    display: flex;
    align-items: flex-start;
}

.tint-l {
    margin-top: 22px;
}

.tint-r {
    flex: 1;
    display: flex;
    flex-direction: column;
}

.tint-top {
    display: flex;
    align-items: center;
    height: 27px;
    margin-top: -1px;
}

.ein {
    margin-left: 6px;
    flex: 1;
}

.colorbtn {
    width: 88px;
    height: 27px;
    padding: 5px;
    background: #ececec;
    border: 1px solid #cfcfcf;
    border-radius: 3px 0 0 3px;
    flex: none;
}

.colorbtn i {
    display: block;
    height: 100%;
    background: #e9e4e4;
    border-radius: 2px;
}

.colorarr {
    width: 11px;
    height: 27px;
    flex: none;
    border: 1px solid #cfcfcf;
    border-left: 0;
    border-radius: 0 3px 3px 0;
    position: relative;
}

.colorarr::after {
    content: "";
    position: absolute;
    left: 1px;
    top: 10px;
    border: 4px solid transparent;
    border-top: 5px solid #555;
    border-bottom: 0;
}

.tint-mid {
    display: flex;
    align-items: center;
    height: 22px;
    margin-top: 8px;
}

.staerke {
    width: 187px;
    flex: none;
}

.slider.st {
    width: 199.500px;
}

.spin.st-s {
    width: 71px;
    margin-left: 14.500px;
}

.reset {
    display: flex;
    align-items: center;
    width: 99px;
    height: 21px;
    margin-top: 8px;
    padding-left: 4px;
    gap: 3px;
    font-size: 10px;
    background: linear-gradient(#fdfdfd, #f3f3f3);
    border: 1px solid #b5b5b5;
    border-radius: 2px;
}

.u {
    width: 14px;
    height: 15px;
    flex: none;
}

.group.g2 {
    height: 135px;
    margin-top: 2px;
}

.srow {
    display: flex;
    align-items: center;
    height: 23px;
    margin-bottom: 8px;
}

.slbl {
    width: 282px;
    flex: none;
}

.spin.over {
    flex: 1;
}

.clr {
    width: 14px;
    height: 12px;
    flex: none;
    margin-right: 4px;
}

.early {
    display: flex;
    align-items: center;
    gap: 7px;
    height: 14px;
    margin-top: 11px;
}

.style-foot {
    position: absolute;
    left: 3px;
    right: -1px;
    bottom: 0;
    height: 24px;
    display: flex;
    align-items: center;
    gap: 6px;
}

.mini {
    width: 24px;
    height: 23px;
    display: flex;
    align-items: center;
    justify-content: center;
    background: linear-gradient(#fdfdfd, #f0f0f0);
    border: 1px solid #bdbdbd;
    border-radius: 3px;
}

.live {
    margin-left: auto;
    display: flex;
    align-items: center;
    gap: 7px;
    margin-right: 8px;
}

.apply {
    width: 79px;
    height: 24px;
    display: flex;
    align-items: center;
    justify-content: center;
    background: linear-gradient(#fdfdfd, #f1f1f1);
    border: 1px solid #bdbdbd;
    border-radius: 3px;
}

.rtabs {
    display: flex;
    margin-top: 4px;
    height: 26px;
    border-top: 1px solid #bdbdbd;
    margin-left: -2.500px;
    margin-right: -3px;
}

.rtab {
    height: 23px;
    width: 176.500px;
    display: flex;
    align-items: center;
    justify-content: center;
    background: #d9d9d9;
    border: 1px solid #c2c2c2;
    border-top: 0;
    border-radius: 0 0 3px 3px;
}

.rtab.sel {
    width: 120px;
    height: 26px;
    background: #f3f3f3;
}

/* Status bar */

.status {
    height: 31px;
    flex: none;
    display: flex;
    align-items: center;
    padding-right: 7px;
    font-size: 11.400px;
}

.locator {
    width: 255px;
    height: 23px;
    flex: none;
    margin-left: 4px;
    display: flex;
    align-items: center;
    padding: 0 6px 0 9px;
    background: #fff;
    border: 1px solid #bdbdbd;
    border-radius: 3px;
    font-size: 13px;
}

.loc-i {
    width: 16px;
    height: 16px;
    flex: none;
}

.loc-t {
    flex: 1;
    margin-left: 4px;
}

.progress {
    width: 148px;
    height: 15px;
    margin-left: auto;
    flex: none;
    border: 1px solid #2a62ab;
    border-radius: 2px;
    background: repeating-linear-gradient(115deg, #4d94e8 0 14px, #5fa3ef 14px 24px);
}

.sl {
    flex: none;
    white-space: nowrap;
}

.s-koord { width: 59.500px; margin-left: 15.500px; }
.s-mass { width: 49px; margin-left: 12px; }
.s-verg { width: 76.500px; margin-left: 7px; }
.s-dreh { width: 54.400px; margin-left: 9px; }
.s-zeich { width: 64.500px; margin-left: 6px; }
.s-epsg { width: 90px; margin-left: 4px; }

.st-in {
    height: 23px;
    flex: none;
}

.w-koord {
    width: 112px;
    padding-left: 8px;
}

.st-i {
    width: 18px;
    height: 16px;
    margin-left: 3px;
    flex: none;
}

.scale {
    width: 93px;
    height: 23px;
    display: flex;
    flex: none;
    background: #fff;
    border: 1px solid #b5b5b5;
    border-radius: 3px;
    align-items: center;
}

.scale-v {
    flex: 1;
    padding-left: 4px;
}

.scale-a {
    width: 20px;
    height: 100%;
    background: linear-gradient(#f7f7f7, #eaeaea);
    border-left: 1px solid #c9c9c9;
    position: relative;
}

.scale-a::after {
    content: "";
    position: absolute;
    left: 5px;
    top: 8px;
    border: 4px solid transparent;
    border-top: 5px solid #555;
    border-bottom: 0;
}

.lock {
    width: 13px;
    height: 18px;
    margin-left: 13px;
    flex: none;
}

.st-sp {
    height: 23px;
}

.st-sp .updown {
    background: none;
    border-left: 0;
}

.w-verg { width: 90.500px; }
.w-dreh { width: 91.600px; }

.st-cb {
    margin-left: 7px;
    height: 13px;
}

.globe {
    width: 14px;
    height: 16px;
    flex: none;
}

.bubble {
    width: 14px;
    height: 18px;
    flex: none;
}
```
